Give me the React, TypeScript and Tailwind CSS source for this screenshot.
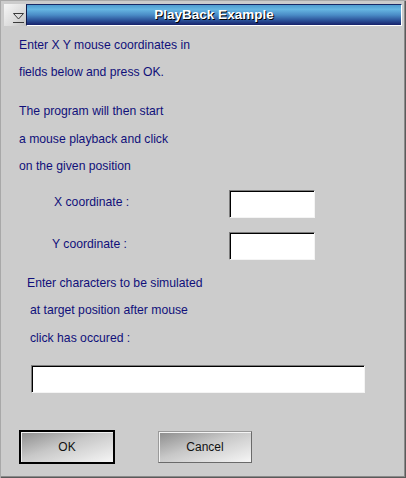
import React from "react";

const font = { fontFamily: '"Liberation Sans", Arial, sans-serif' };

function Field({ className }: { className: string }) {
  return (
    <div
      className={`h-[28px] border border-t-[#7c7c7c] border-l-[#7c7c7c] border-b-[#f4f4f4] border-r-[#f4f4f4] bg-white shadow-[inset_1px_1px_0_#000] ${className}`}
    />
  );
}

export default function App() {
  return (
    <div
      style={font}
      className="flex h-[478px] w-[406px] flex-col bg-[#cccccc] text-[12.2px] text-[#10107a] shadow-[inset_1px_1px_0_#a8a8a8,inset_-1px_-1px_0_#5a5a5a,inset_-2px_-2px_0_#8a8a8a]"
    >
      {/* title bar */}
      <div className="flex px-1 pt-1">
        <div className="flex h-[22px] w-[22px] items-center justify-center bg-[linear-gradient(135deg,#f6f6f6,#dcdcdc_60%,#c0c0c0)]">
          <svg width="22" height="22" viewBox="0 0 22 22" fill="none" stroke="#3a3a3a" strokeWidth="1">
            <path d="M9.5 9.5 H19.5 L14.5 15 Z" />
            <path d="M9 18.5 H20" />
          </svg>
        </div>
        <div className="flex h-[22px] flex-1 items-center justify-center border border-t-[#1a2a66] border-l-[#101a4a] border-b-white border-r-white bg-[linear-gradient(to_bottom,#4f9ccf_0%,#66b6e2_22%,#4a8cc6_50%,#2a4f96_78%,#16216a_100%)]">
          <span className="text-[13.5px] font-bold leading-none text-white [text-shadow:1px_1px_0_#000]">
            PlayBack Example
          </span>
        </div>
      </div>

      {/* intro text */}
      <div className="mt-[6px] pl-[19px] leading-[27px]">
        <p>Enter X Y mouse coordinates in</p>
        <p>fields below and press OK.</p>
      </div>
      <div className="mt-[12px] pl-[19px] leading-[27.5px]">
        <p>The program will then start</p>
        <p>a mouse playback and click</p>
        <p>on the given position</p>
      </div>

      {/* coordinates */}
      <div className="mt-[9px] flex items-center">
        <span className="mb-[3px] w-[229px] pl-[54px]">X coordinate :</span>
        <Field className="w-[86px]" />
      </div>
      <div className="mt-[14px] flex items-center">
        <span className="mb-[3px] w-[229px] pl-[52px]">Y coordinate :</span>
        <Field className="w-[86px]" />
      </div>

      {/* characters */}
      <div className="mt-[10px] leading-[27.5px]">
        <p className="pl-[27px]">Enter characters to be simulated</p>
        <p className="pl-[30px]">at target position after mouse</p>
        <p className="pl-[30px]">click has occured :</p>
      </div>
      <div className="mt-[13px] pl-[31px]">
        <Field className="w-[334px]" />
      </div>

      {/* buttons */}
      <div className="mt-[37px] flex items-center pl-[19px]">
        <button className="flex h-[34px] w-[96px] items-center justify-center border-2 border-black bg-[linear-gradient(to_bottom_right,#8c8c8c,#c8c8c8_45%,#f6f6f6)] text-[12px] text-[#111] shadow-[inset_1px_1px_0_#f0f0f0]">
          OK
        </button>
        <button className="ml-[43px] flex h-[32px] w-[94px] items-center justify-center border border-t-[#9a9a9a] border-l-[#9a9a9a] border-b-[#6a6a6a] border-r-[#6a6a6a] bg-[linear-gradient(to_bottom_right,#8c8c8c,#c8c8c8_45%,#f6f6f6)] text-[12px] text-[#111] shadow-[inset_1px_1px_0_#f4f4f4]">
          Cancel
        </button>
      </div>
    </div>
  );
}
